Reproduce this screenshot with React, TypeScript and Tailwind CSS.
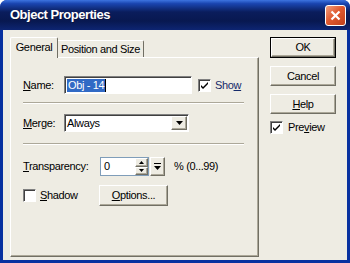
import React from "react";

const U = ({ children }: { children: React.ReactNode }) => (
  <span className="underline underline-offset-[1px]">{children}</span>
);

const raised =
  "bg-[#eeece3] border border-t-white border-l-white border-r-[#716f64] border-b-[#716f64] shadow-[inset_-1px_-1px_0_#aca899]";
const sunken =
  "bg-white border border-t-[#808080] border-l-[#808080] border-r-white border-b-white shadow-[inset_1px_1px_0_#404040]";

const Check = ({ checked }: { checked: boolean }) => (
  <div className={`w-[13px] h-[13px] ${sunken} flex items-center justify-center`}>
    {checked && (
      <svg width="9" height="9" viewBox="0 0 9 9">
        <path d="M1 4 L3 6 L8 1 L8 3 L3 8 L1 6 Z" fill="#000" />
      </svg>
    )}
  </div>
);

const Button = ({
  children,
  def,
  className = "",
}: {
  children: React.ReactNode;
  def?: boolean;
  className?: string;
}) => (
  <div className={`${def ? "border border-black" : ""} ${className}`}>
    <div className={`${raised} h-full flex items-center justify-center`}>{children}</div>
  </div>
);

const Tri = () => (
  <svg width="7" height="4" viewBox="0 0 7 4">
    <path d="M0 0 H7 L3.5 4 Z" fill="#000" />
  </svg>
);

export default function App() {
  return (
    <div className="w-[350px] h-[263px] bg-[#0831a0] rounded-t-[7px] flex flex-col font-['Liberation_Sans',Arial,sans-serif] text-[11px] tracking-[-0.35px] text-black overflow-hidden">
      {/* Title bar */}
      <div className="h-[30px] shrink-0 flex items-center justify-between pl-[10px] pr-[4px] bg-[linear-gradient(to_bottom,#3d74e0_0%,#1a45b0_12%,#0a1d5c_40%,#081850_70%,#0d2572_100%)]">
        <span className="text-white font-bold text-[13px] tracking-[-0.5px] [text-shadow:1px_1px_0_#0a1440]">
          Object Properties
        </span>
        <div className="w-[21px] h-[21px] rounded-[3px] border border-white bg-[linear-gradient(135deg,#f0a080_0%,#e05a30_45%,#c0401a_100%)] flex items-center justify-center">
          <svg width="11" height="11" viewBox="0 0 11 11">
            <path d="M1.5 1.5 L9.5 9.5 M9.5 1.5 L1.5 9.5" stroke="#fff" strokeWidth="2.2" />
          </svg>
        </div>
      </div>

      {/* Body */}
      <div className="flex-1 mx-[3px] mb-[3px] bg-[#eeece3] flex pt-[7px]">
        {/* Left: tabs */}
        <div className="ml-[7px] w-[249px] flex flex-col">
          <div className="h-[20px] flex items-end">
            <div className="h-[21px] w-[48px] -mb-[1px] relative z-10 bg-[#eeece3] border-t border-l border-white border-r border-r-[#716f64] rounded-t-[2px] flex items-center justify-center pb-[2px]">
              General
            </div>
            <div className="h-[17px] w-[86px] bg-[#eeece3] border-t border-white border-r border-r-[#716f64] rounded-tr-[2px] flex items-center justify-center">
              Position and Size
            </div>
          </div>
          <div className="h-[200px] border-t border-l border-white border-r border-b border-r-[#716f64] border-b-[#716f64] shadow-[inset_-1px_-1px_0_#aca899] pl-[12px] pr-[14px]">
            {/* Name */}
            <div className="mt-[18px] h-[18px] flex items-center">
              <span className="w-[41px]">
                <U>N</U>ame:
              </span>
              <div className={`${sunken} w-[128px] h-[18px] flex items-center pl-[2px]`}>
                <span className="bg-[#316ac5] text-white leading-[13px] px-[1px]">Obj - 14</span>
                <span className="w-[1px] h-[13px] bg-black" />
              </div>
              <div className="ml-[6px]">
                <Check checked />
              </div>
              <span className="ml-[4px] text-[#152a6a]">
                Sho<U>w</U>
              </span>
            </div>
            <div className="mt-[8px] h-[2px] border-t border-[#aca899] border-b border-b-white" />
            {/* Merge */}
            <div className="mt-[10px] h-[18px] flex items-center">
              <span className="w-[41px]">
                <U>M</U>erge:
              </span>
              <div className={`${sunken} w-[125px] h-[18px] flex items-center justify-between pl-[2px] pr-[1px]`}>
                <span>Always</span>
                <div className={`${raised} w-[16px] h-[14px] flex items-center justify-center`}>
                  <Tri />
                </div>
              </div>
            </div>
            <div className="mt-[11px] h-[2px] border-t border-[#aca899] border-b border-b-white" />
            {/* Transparency */}
            <div className="mt-[12px] h-[19px] flex items-center">
              <span className="w-[77px]">
                <U>T</U>ransparency:
              </span>
              <div className="h-[19px] flex border border-[#7f9db9] bg-white">
                <div className="w-[34px] flex items-center pl-[3px]">0</div>
                <div className="w-[13px] flex flex-col">
                  <div className={`${raised} flex-1 flex items-center justify-center`}>
                    <svg width="5" height="3" viewBox="0 0 5 3">
                      <path d="M0 3 H5 L2.5 0 Z" fill="#000" />
                    </svg>
                  </div>
                  <div className={`${raised} flex-1 flex items-center justify-center`}>
                    <svg width="5" height="3" viewBox="0 0 5 3">
                      <path d="M0 0 H5 L2.5 3 Z" fill="#000" />
                    </svg>
                  </div>
                </div>
              </div>
              <div className={`${raised} ml-[1px] w-[15px] h-[19px] flex flex-col items-center justify-center`}>
                <div className="w-[7px] h-[1px] bg-black mb-[2px]" />
                <Tri />
              </div>
              <span className="ml-[9px]">% (0...99)</span>
            </div>
            {/* Shadow */}
            <div className="mt-[9px] h-[21px] flex items-center">
              <Check checked={false} />
              <span className="ml-[4px] w-[59px]">
                <U>S</U>hadow
              </span>
              <Button className="w-[69px] h-[21px]">
                <span>
                  <U>O</U>ptions...
                </span>
              </Button>
            </div>
          </div>
        </div>

        {/* Right: buttons */}
        <div className="ml-[11px] w-[66px] flex flex-col">
          <Button def className="h-[21px]">
            OK
          </Button>
          <Button className="mt-[8px] h-[20px]">Cancel</Button>
          <Button className="mt-[8px] h-[20px]">
            <span>
              <U>H</U>elp
            </span>
          </Button>
          <div className="mt-[7px] h-[13px] flex items-center">
            <Check checked />
            <span className="ml-[5px]">
              Pre<U>v</U>iew
            </span>
          </div>
        </div>
      </div>
    </div>
  );
}
